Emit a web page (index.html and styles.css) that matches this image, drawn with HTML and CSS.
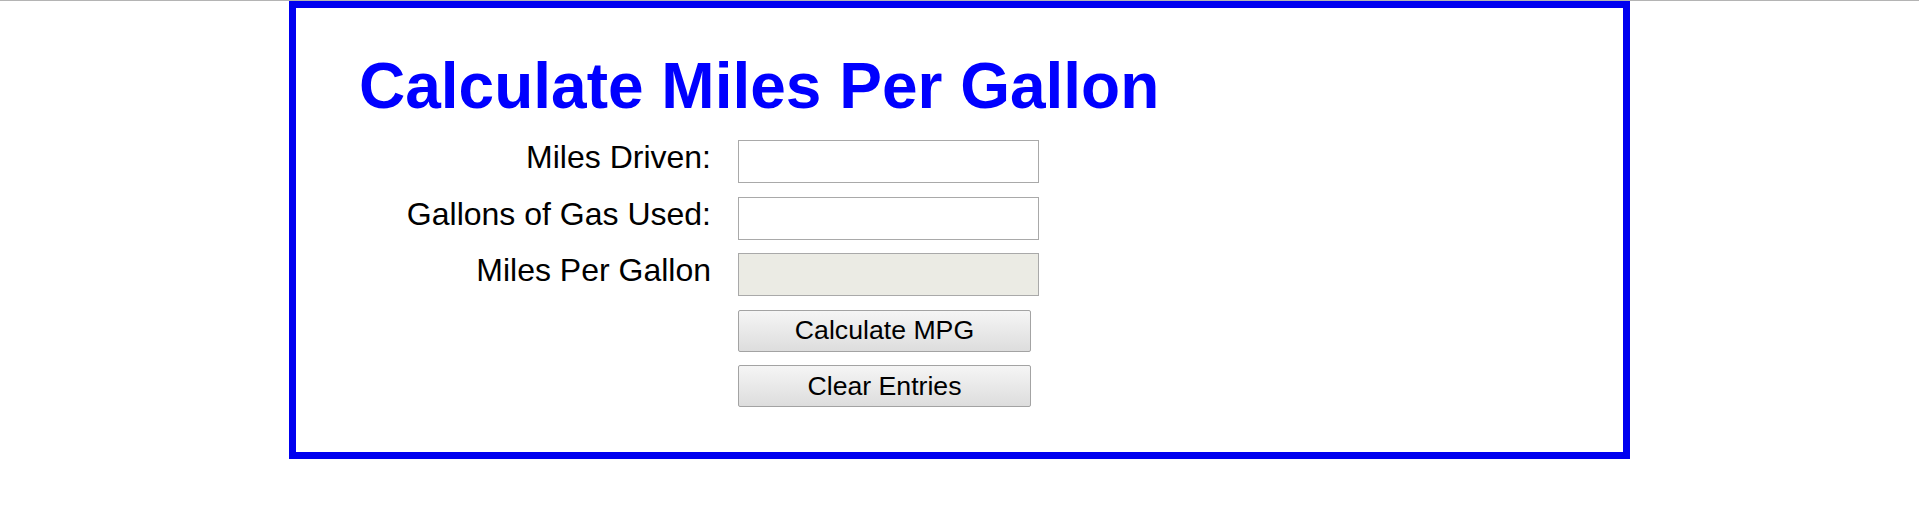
FILE: index.html
```html
<!DOCTYPE html>
<html lang="en">
<head>
<meta charset="utf-8">
<title>Calculate Miles Per Gallon</title>
<link rel="stylesheet" href="styles.css">
</head>
<body>
<main class="box">
  <h1 class="title">Calculate Miles Per Gallon</h1>
  <form class="form">
    <label class="label" for="miles">Miles Driven:</label>
    <input class="field" type="text" id="miles">
    <label class="label" for="gallons">Gallons of Gas Used:</label>
    <input class="field" type="text" id="gallons">
    <label class="label" for="mpg">Miles Per Gallon</label>
    <input class="field field-disabled" type="text" id="mpg" disabled>
    <button class="btn" type="button">Calculate MPG</button>
    <button class="btn" type="button">Clear Entries</button>
  </form>
</main>
</body>
</html>
```
FILE: styles.css
```css
html, body {
  margin: 0;
  padding: 0;
  background: #ffffff;
}
body {
  border-top: 1px solid #b4b4b4;
  font-family: "Liberation Sans", Arial, sans-serif;
}
.box {
  box-sizing: border-box;
  width: 1341px;
  height: 458px;
  margin: 0 auto;
  border: 7px solid #0000f0;
  padding: 46px 0 0 63px;
}
.title {
  margin: 0 0 22px 0;
  font-size: 64px;
  line-height: 1;
  font-weight: bold;
  color: #0000ff;
}
.form {
  display: grid;
  grid-template-columns: 352px 301px;
  column-gap: 27px;
  row-gap: 13.5px;
  align-items: center;
}
.label {
  grid-column: 1;
  text-align: right;
  font-size: 32px;
  line-height: 1;
  padding-bottom: 9px;
  color: #000;
}
.field {
  grid-column: 2;
  box-sizing: border-box;
  width: 301px;
  height: 43px;
  margin: 0;
  border: 1px solid #a9a9a9;
  background: #ffffff;
  font-size: 26px;
  padding: 2px 4px;
}
.field-disabled {
  background: #ebebe4;
}
.btn {
  grid-column: 2;
  box-sizing: border-box;
  width: 293px;
  height: 42px;
  margin: 0;
  border: 1px solid #a3a3a3;
  border-radius: 2px;
  background: linear-gradient(#f5f5f5, #dddddd);
  font-family: "Liberation Sans", Arial, sans-serif;
  font-size: 26.67px;
  color: #000;
  padding: 0;
}
```
